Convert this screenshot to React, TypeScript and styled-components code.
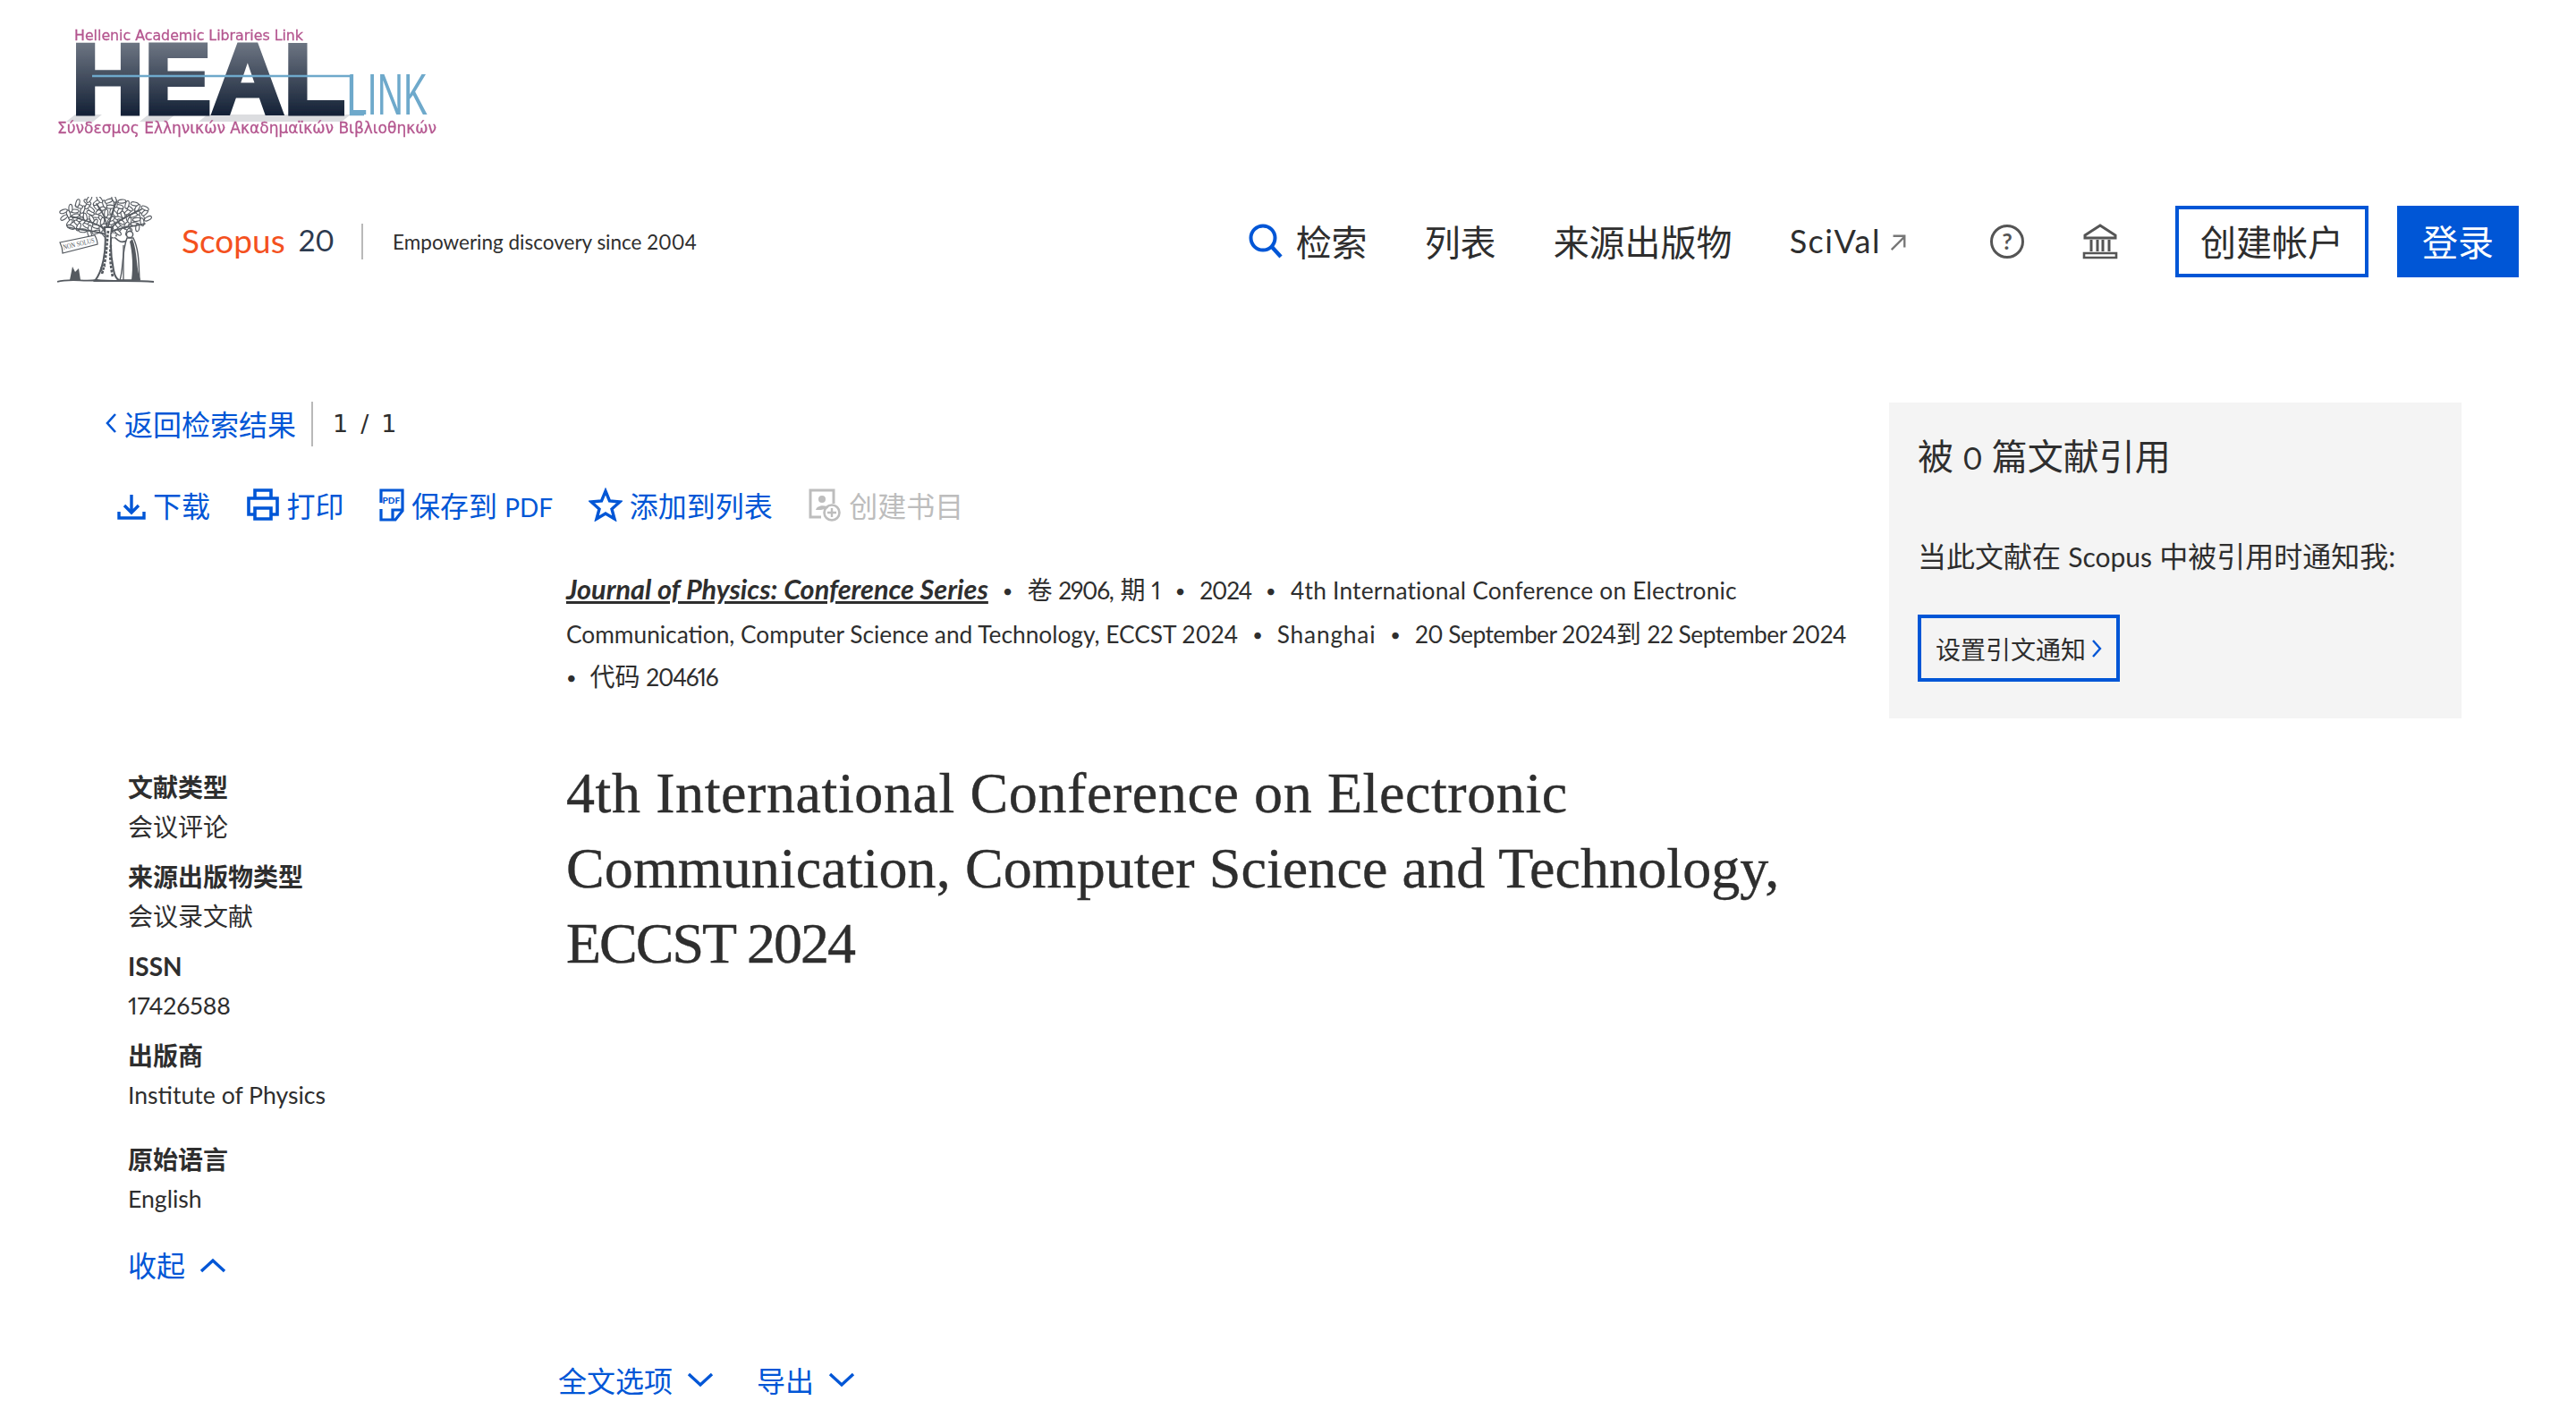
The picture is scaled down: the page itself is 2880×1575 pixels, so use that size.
import styled, { createGlobalStyle } from "styled-components";
import { Fragment } from "react";

const BLUE = "#0056d6";
const INK = "#2e2e2e";
const SANS = `Lato, "Noto Sans CJK SC", sans-serif`;

const GlobalStyle = createGlobalStyle`
  html, body {
    margin: 0;
    background: #fff;
    color: ${INK};
    font-family: ${SANS};
    font-feature-settings: "pnum";
  }
`;

const Page = styled.div`
  width: 2880px;
  height: 1575px;
  overflow: hidden;
`;

const InstitutionLogo = styled.svg`
  display: block;
  width: 428px;
  height: 124px;
  margin: 30px 0 0 62px;
  overflow: visible;
`;

const TopNav = styled.nav`
  display: flex;
  align-items: center;
  justify-content: space-between;
  height: 96px;
  margin-top: 68px;
  padding: 0 64px;
`;

const Brand = styled.div`
  display: flex;
  align-items: center;
`;

const TreeLogo = styled.svg`
  width: 108px;
  height: 96px;
  margin-bottom: 4px;
`;

const ScopusName = styled.span`
  margin: 0 0 4px 31px;
  font-size: 37px;
  color: #f4511e;
`;

const ScopusAge = styled.span`
  margin: 0 0 4px 15px;
  font-size: 33px;
  color: #2c3a4f;
`;

const BrandDivider = styled.span`
  width: 2px;
  height: 40px;
  margin: 0 33px 0 30px;
  background: #b9b9b9;
`;

const Tagline = styled.span`
  font-size: 22.5px;
`;

const NavLinks = styled.div`
  display: flex;
  align-items: center;
  gap: 64px;
`;

const NavLink = styled.a`
  display: flex;
  align-items: center;
  gap: 14px;
  padding-bottom: 2px;
  font-size: 40px;
  color: ${INK};
`;

const SciValLabel = styled.span`
  font-size: 36px;
  letter-spacing: 1.5px;
`;

const NavIcon = styled.svg<{ $push?: boolean }>`
  width: 40px;
  height: 40px;
  margin-left: ${(p) => (p.$push ? "28px" : "0")};
`;

const NavButton = styled.a<{ $primary?: boolean }>`
  display: flex;
  align-items: center;
  justify-content: center;
  box-sizing: border-box;
  height: 80px;
  padding: 0 24px 2px;
  border: 4px solid ${BLUE};
  font-size: 40px;
  margin-left: ${(p) => (p.$primary ? "-32px" : "0")};
  color: ${(p) => (p.$primary ? "#fff" : INK)};
  background: ${(p) => (p.$primary ? BLUE : "#fff")};
`;

const Layout = styled.div`
  display: grid;
  grid-template-columns: 2112px 640px;
  margin-top: 132px;
`;

const BackRow = styled.div`
  display: flex;
  align-items: center;
  height: 50px;
  margin: -2px 0 0 118px;
`;

const BackLink = styled.a`
  display: flex;
  align-items: center;
  gap: 8px;
  font-size: 32px;
  color: ${BLUE};
`;

const BackDivider = styled.span`
  width: 2px;
  height: 50px;
  margin: 2px 22px 0 17px;
  background: #b9b9b9;
`;

const Pager = styled.span`
  display: flex;
  gap: 14px;
  font-family: "DejaVu Sans", sans-serif;
  font-size: 27px;
`;

const Toolbar = styled.div`
  display: flex;
  align-items: center;
  gap: 39.5px;
  height: 40px;
  margin: 46px 0 0 131px;
`;

const ToolButton = styled.a<{ $disabled?: boolean }>`
  display: flex;
  align-items: center;
  gap: 8px;
  font-size: 32px;
  color: ${(p) => (p.$disabled ? "#bdbdbd" : BLUE)};
`;

const ToolIcon = styled.svg<{ $width: number }>`
  width: ${(p) => p.$width}px;
  height: 38px;
  flex: none;
`;

const LatinSmall = styled.span`
  font-size: 28px;
`;

const Citation = styled.p`
  margin: 51px 0 0 633px;
  font-size: 26.3px;
  line-height: 47.5px;
  white-space: nowrap;
`;

const Han = styled.span`
  font-size: 28px;
`;

const Fit = styled.span<{ $spacing: number }>`
  letter-spacing: ${(p) => p.$spacing}px;
`;

const JournalName = styled.a`
  font-size: 30.6px;
  font-weight: 700;
  font-style: italic;
  text-decoration: underline;
`;

const Dot = styled.span<{ $first?: boolean }>`
  margin: 0 ${(p) => (p.$first ? "15px 0 0" : "16px")};
  font-size: 20px;
  vertical-align: 2px;
`;

const Body = styled.div`
  display: grid;
  grid-template-columns: 633px 1fr;
  margin-top: 65.5px;
`;

const Meta = styled.dl`
  margin: 11px 0 0 143px;
`;

const MetaLabel = styled.dt<{ $wide?: boolean }>`
  margin-top: ${(p) => (p.$wide ? "28px" : "12px")};
  font-size: 28px;
  line-height: 44px;
  font-weight: 700;
  &:first-child {
    margin-top: 0;
  }
`;

const MetaValue = styled.dd<{ $latin?: boolean }>`
  margin: 0;
  font-size: ${(p) => (p.$latin ? "26.6px" : "28px")};
  line-height: 44px;
`;

const Collapse = styled.a`
  display: flex;
  align-items: center;
  gap: 16px;
  margin-top: 31px;
  font-size: 32px;
  line-height: 44px;
  color: ${BLUE};
`;

const Title = styled.h1`
  margin: -2px 0 0;
  font-family: "Liberation Serif", serif;
  font-size: 64px;
  line-height: 84px;
  font-weight: 400;
  -webkit-text-stroke: 0.4px ${INK};
`;

const TitleLine = styled.span<{ $spacing: number }>`
  display: block;
  letter-spacing: ${(p) => p.$spacing}px;
`;

const ActionRow = styled.div`
  display: flex;
  gap: 48px;
  height: 40px;
  margin: 85px 0 0 624px;
`;

const Action = styled.a`
  display: flex;
  align-items: center;
  gap: 16px;
  font-size: 32px;
  color: ${BLUE};
`;

const Chevron = styled.svg`
  width: 30px;
  height: 18px;
`;

const Panel = styled.aside`
  box-sizing: border-box;
  height: 353px;
  padding: 34px 32px 0;
  background: #f4f4f4;
`;

const PanelTitle = styled.h2`
  margin: 0;
  font-size: 40px;
  line-height: 52px;
  font-weight: 400;
`;

const PanelDigit = styled.span`
  font-size: 34px;
`;

const PanelText = styled.p`
  margin: 62px 0 0;
  font-size: 32px;
  line-height: 44px;
`;

const PanelLatin = styled.span`
  font-size: 30px;
`;

const AlertButton = styled.a`
  display: inline-flex;
  align-items: center;
  gap: 6px;
  box-sizing: border-box;
  height: 75px;
  margin-top: 43px;
  padding: 0 16px;
  border: 4px solid ${BLUE};
  font-size: 28px;
`;

const leaves = Array.from({ length: 84 }, (_, i) => {
  const a = i * 2.399;
  const r = Math.sqrt((i + 0.5) / 84);
  return {
    x: 54 + Math.cos(a) * r * 50,
    y: 22 + Math.sin(a) * r * 21,
    rot: (i * 47) % 180,
  };
});

function Tree() {
  const ink = "#555a60";
  return (
    <TreeLogo viewBox="0 0 108 96">
      <g fill="#fff" stroke={ink} strokeWidth="1.1">
        {leaves.map((l, i) => (
          <ellipse key={i} cx={l.x} cy={l.y} rx="4.4" ry="2" transform={`rotate(${l.rot} ${l.x} ${l.y})`} />
        ))}
      </g>
      <g fill="none" stroke={ink} strokeWidth="1.7" strokeLinecap="round">
        <path d="M56 42 C54 32 36 28 16 22 M56 40 C56 30 52 18 44 8 M58 40 C62 28 78 22 94 14 M59 40 C68 34 82 34 98 30 M54 42 C44 38 30 38 12 34 M56 36 C60 24 62 14 66 6" />
      </g>
      <path d="M53 34 L61 34 C59 50 60 68 63 82 C64 88 66 92 70 94 L42 94 C50 84 56 62 53 34 Z" fill="#fff" stroke={ink} strokeWidth="2" />
      <path d="M57 38 C55 52 56 66 50 86 M60 54 C58 66 60 78 62 90" fill="none" stroke={ink} strokeWidth="2.6" strokeDasharray="3 1.6" />
      <path d="M54 78 C49 74 47 82 52 84" fill="none" stroke={ink} strokeWidth="1.4" />
      <circle cx="63" cy="43" r="3" fill="#fff" stroke={ink} strokeWidth="1.6" strokeDasharray="1.5 1" />
      <path d="M79 48 C72 53 68 49 65 46" fill="none" stroke={ink} strokeWidth="1.6" />
      <path d="M78 46 C72 62 74 82 70 93 L92 93 C91 78 92 60 85 46 Z" fill="#fff" stroke={ink} strokeWidth="1.4" />
      <path d="M84 47 C90 62 88 80 93 93 L83 93 C85 78 84 62 81 50 Z" fill={ink} />
      <circle cx="81" cy="42" r="3.6" fill="#fff" stroke={ink} strokeWidth="1.5" />
      <path d="M74 54 V93" stroke={ink} strokeWidth="1.3" />
      <path d="M3 51 L42 43 C44 47 45 50 45 53 L6 63 C6 59 5 55 3 51 Z" fill="#fff" stroke={ink} strokeWidth="1.2" />
      <text x="7" y="59" fontFamily="Liberation Serif, serif" fontSize="8" fill={ink} textLength="36" lengthAdjust="spacingAndGlyphs" transform="rotate(-13 7 59)">
        NON SOLUS
      </text>
      <path d="M0 95 C14 91 30 95 44 93 C60 95 84 93 108 95" fill="none" stroke={ink} strokeWidth="1.8" />
      <path d="M14 93 L17 78 L20 84 L24 80 L26 93 Z" fill={ink} />
    </TreeLogo>
  );
}

function HealLink() {
  const pink = "#b4568f";
  const steel = "#6ea9cb";
  return (
    <InstitutionLogo viewBox="0 0 428 124">
      <defs>
        <linearGradient id="healFill" gradientUnits="userSpaceOnUse" x1="0" y1="16" x2="0" y2="98">
          <stop offset="0" stopColor="#6f7784" />
          <stop offset="1" stopColor="#152237" />
        </linearGradient>
        <filter id="soft">
          <feGaussianBlur stdDeviation="0.6" />
        </filter>
      </defs>
      <g filter="url(#soft)">
        <text x="21" y="15" fontFamily="DejaVu Sans, sans-serif" fontSize="16" fill={pink} stroke={pink} strokeWidth="0.3" textLength="256" lengthAdjust="spacingAndGlyphs">
          Hellenic Academic Libraries Link
        </text>
        <path d="M22 98 L12 106 H42 L52 98 Z M104 98 L94 106 H124 L134 98 Z M170 98 L160 106 H320 L330 98 Z" fill="#dcdde0" />
        <text x="18" y="97" fontFamily="Liberation Sans, sans-serif" fontWeight="700" fontSize="112" fill="url(#healFill)" stroke="url(#healFill)" strokeWidth="5" textLength="306" lengthAdjust="spacingAndGlyphs">
          HEAL
        </text>
        <path d="M41 55 H330 V98 H345" fill="none" stroke={steel} strokeWidth="2.4" />
        <text x="326" y="98" fontFamily="Liberation Sans, sans-serif" fontSize="64" fill={steel} textLength="90" lengthAdjust="spacingAndGlyphs">
          LINK
        </text>
        <text x="2" y="119" fontFamily="DejaVu Sans, sans-serif" fontSize="17" fill={pink} stroke={pink} strokeWidth="0.3" textLength="424" lengthAdjust="spacingAndGlyphs">
          Σύνδεσμος Ελληνικών Ακαδημαϊκών Βιβλιοθηκών
        </text>
      </g>
    </InstitutionLogo>
  );
}

const ChevronDown = () => (
  <Chevron viewBox="0 0 30 18">
    <path d="M2 3 L15 15 L28 3" fill="none" stroke={BLUE} strokeWidth="3.4" />
  </Chevron>
);

const metaRows = [
  { label: "文献类型", value: "会议评论" },
  { label: "来源出版物类型", value: "会议录文献" },
  { label: "ISSN", value: "17426588", latin: true },
  { label: "出版商", value: "Institute of Physics", latin: true },
  { label: "原始语言", value: "English", latin: true, wide: true },
];

export default function App() {
  return (
    <Page>
      <GlobalStyle />
      <HealLink />
      <TopNav>
        <Brand>
          <Tree />
          <ScopusName>Scopus</ScopusName>
          <ScopusAge>20</ScopusAge>
          <BrandDivider />
          <Tagline>Empowering discovery since 2004</Tagline>
        </Brand>
        <NavLinks>
          <NavLink>
            <NavIcon viewBox="0 0 40 40">
              <circle cx="17" cy="17" r="13.5" fill="none" stroke={BLUE} strokeWidth="4" />
              <path d="M27 27 L37 38" stroke={BLUE} strokeWidth="4.4" />
            </NavIcon>
            检索
          </NavLink>
          <NavLink>列表</NavLink>
          <NavLink>来源出版物</NavLink>
          <NavLink>
            <SciValLabel>SciVal</SciValLabel>
            <svg width="20" height="20" viewBox="0 0 22 22" style={{ marginLeft: -5, marginTop: 4 }}>
              <path d="M3 20 L19 4 M5 3 H19 V17" fill="none" stroke="#777" strokeWidth="2.6" />
            </svg>
          </NavLink>
          <NavIcon $push viewBox="0 0 40 40">
            <circle cx="20" cy="20" r="17.5" fill="none" stroke="#555" strokeWidth="3" />
            <text x="20" y="29" textAnchor="middle" fontFamily="Lato, sans-serif" fontSize="25" fontWeight="700" fill="#555">?</text>
          </NavIcon>
          <NavIcon viewBox="0 0 40 40">
            <path d="M3 13 L20 2 L37 13 V16 H3 Z" fill="none" stroke="#555" strokeWidth="3" />
            <path d="M10 18 V31 M17 18 V31 M23 18 V31 M30 18 V31" stroke="#555" strokeWidth="3" />
            <path d="M2 33 H38 V38 H2 Z" fill="none" stroke="#555" strokeWidth="2.6" />
          </NavIcon>
          <NavButton>创建帐户</NavButton>
          <NavButton $primary>登录</NavButton>
        </NavLinks>
      </TopNav>

      <Layout>
        <main>
          <BackRow>
            <BackLink>
              <svg width="13" height="24" viewBox="0 0 13 24">
                <path d="M11 2 L2 12 L11 22" fill="none" stroke={BLUE} strokeWidth="2.6" />
              </svg>
              返回检索结果
            </BackLink>
            <BackDivider />
            <Pager>
              <span>1</span>
              <span>/</span>
              <span>1</span>
            </Pager>
          </BackRow>

          <Toolbar>
            <ToolButton>
              <ToolIcon $width={32} viewBox="0 0 32 38">
                <path d="M16 8 V28 M8 20 L16 28 L24 20 M2 27 V34 H30 V27" fill="none" stroke={BLUE} strokeWidth="3.4" />
              </ToolIcon>
              下载
            </ToolButton>
            <ToolButton>
              <ToolIcon $width={38} viewBox="0 0 38 38">
                <path d="M10 12 V3 H28 V12 M10 30 H3 V12 H35 V30 H28" fill="none" stroke={BLUE} strokeWidth="3.6" />
                <path d="M10 23 H28 V35 H10 Z" fill="none" stroke={BLUE} strokeWidth="3.6" />
              </ToolIcon>
              打印
            </ToolButton>
            <ToolButton>
              <ToolIcon $width={28} viewBox="0 0 28 38">
                <path d="M2 17 V3 H26 V26 L18 36 H2 V24" fill="none" stroke={BLUE} strokeWidth="3.2" />
                <path d="M26 25 H15 V36" fill="none" stroke={BLUE} strokeWidth="3.2" />
                <text x="3.5" y="18" fontFamily="Lato, sans-serif" fontSize="10" fontWeight="900" fill={BLUE}>PDF</text>
              </ToolIcon>
              <span>保存到 <LatinSmall>PDF</LatinSmall></span>
            </ToolButton>
            <ToolButton>
              <ToolIcon $width={38} viewBox="0 0 38 38">
                <path d="M19 4 L23.5 15 L35 16 L26 24 L29 35 L19 29 L9 35 L12 24 L3 16 L14.5 15 Z" fill="none" stroke={BLUE} strokeWidth="3.4" />
              </ToolIcon>
              添加到列表
            </ToolButton>
            <ToolButton $disabled>
              <ToolIcon $width={38} viewBox="0 0 38 38">
                <path d="M15 33 H3 V3 H29 V18" fill="none" stroke="#bdbdbd" strokeWidth="3" />
                <circle cx="16" cy="13" r="4" fill="#bdbdbd" />
                <path d="M9 25 C10 19 22 19 23 23 L15 25 Z" fill="#bdbdbd" />
                <circle cx="27" cy="28" r="8.5" fill="none" stroke="#bdbdbd" strokeWidth="2.6" />
                <path d="M27 23 V33 M22 28 H32" stroke="#bdbdbd" strokeWidth="2.4" />
              </ToolIcon>
              创建书目
            </ToolButton>
          </Toolbar>

          <Citation>
            <JournalName>Journal of Physics: Conference Series</JournalName>
            <Dot>•</Dot>
            <Han>卷</Han> <Fit $spacing={-1.2}>2906</Fit>, <Han>期</Han> 1
            <Dot>•</Dot>
            <Fit $spacing={-1.2}>2024</Fit>
            <Dot>•</Dot>
            <Fit $spacing={0.2}>4th International Conference on Electronic</Fit>
            <br />
            Communication, Computer Science and Technology, ECCST 2024
            <Dot>•</Dot>
            <Fit $spacing={0.8}>Shanghai</Fit>
            <Dot>•</Dot>
            <Fit $spacing={-0.5}>20 September 2024</Fit>
            <Han>到</Han> <Fit $spacing={-0.5}>22 September 2024</Fit>
            <br />
            <Dot $first>•</Dot>
            <Han>代码</Han> <Fit $spacing={-1.2}>204616</Fit>
          </Citation>

          <Body>
            <Meta>
              {metaRows.map((row) => (
                <Fragment key={row.label}>
                  <MetaLabel $wide={row.wide}>{row.label}</MetaLabel>
                  <MetaValue $latin={row.latin}>{row.value}</MetaValue>
                </Fragment>
              ))}
              <Collapse>
                收起
                <Chevron viewBox="0 0 30 18">
                  <path d="M2 15 L15 3 L28 15" fill="none" stroke={BLUE} strokeWidth="3.4" />
                </Chevron>
              </Collapse>
            </Meta>
            <Title>
              <TitleLine $spacing={0.6}>4th International Conference on Electronic</TitleLine>
              <TitleLine $spacing={0.1}>Communication, Computer Science and Technology,</TitleLine>
              <TitleLine $spacing={-2}>ECCST 2024</TitleLine>
            </Title>
          </Body>

          <ActionRow>
            <Action>
              全文选项
              <ChevronDown />
            </Action>
            <Action>
              导出
              <ChevronDown />
            </Action>
          </ActionRow>
        </main>

        <Panel>
          <PanelTitle>
            被 <PanelDigit>0</PanelDigit> 篇文献引用
          </PanelTitle>
          <PanelText>
            当此文献在 <PanelLatin>Scopus</PanelLatin> 中被引用时通知我:
          </PanelText>
          <AlertButton>
            设置引文通知
            <svg width="12" height="22" viewBox="0 0 12 22">
              <path d="M2 2 L10 11 L2 20" fill="none" stroke={BLUE} strokeWidth="2.4" />
            </svg>
          </AlertButton>
        </Panel>
      </Layout>
    </Page>
  );
}
